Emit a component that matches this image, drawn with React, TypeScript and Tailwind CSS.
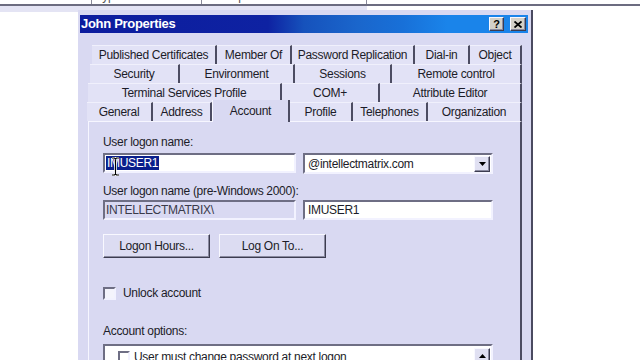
import React from "react";

const raised =
  "border border-t-[#f8f8ff] border-l-[#f8f8ff] border-r-[#3c3c50] border-b-[#3c3c50] shadow-[inset_-1px_-1px_0_#8a8aa0]";
const sunken =
  "border-2 border-t-[#6e6e84] border-l-[#6e6e84] border-r-[#f2f2ff] border-b-[#f2f2ff]";

type Tab = { label: string; w: string; active?: boolean };

const tabRows: { ml: string; tabs: Tab[] }[] = [
  {
    ml: "ml-[12px]",
    tabs: [
      { label: "Published Certificates", w: "w-[125px]" },
      { label: "Member Of", w: "w-[75px]" },
      { label: "Password Replication", w: "w-[123px]" },
      { label: "Dial-in", w: "w-[55px]" },
      { label: "Object", w: "w-[52px]" },
    ],
  },
  {
    ml: "ml-[10px]",
    tabs: [
      { label: "Security", w: "w-[90px]" },
      { label: "Environment", w: "w-[115px]" },
      { label: "Sessions", w: "w-[97px]" },
      { label: "Remote control", w: "w-[130px]" },
    ],
  },
  {
    ml: "ml-[8px]",
    tabs: [
      { label: "Terminal Services Profile", w: "w-[194px]" },
      { label: "COM+", w: "w-[98px]" },
      { label: "Attribute Editor", w: "w-[142px]" },
    ],
  },
  {
    ml: "ml-[7px]",
    tabs: [
      { label: "General", w: "w-[66px]" },
      { label: "Address", w: "w-[59px]" },
      { label: "Account", w: "w-[78px]", active: true },
      { label: "Profile", w: "w-[63px]" },
      { label: "Telephones", w: "w-[75px]" },
      { label: "Organization", w: "w-[94px]" },
    ],
  },
];

function TabButton({ tab }: { tab: Tab }) {
  if (tab.active) {
    return (
      <div
        className={`relative z-10 -mt-[2px] flex h-[22px] shrink-0 items-start justify-center border-l border-r-2 border-l-[#f6f6ff] border-r-[#4c4c62] bg-[#d9d9f2] pt-[2px] ${tab.w}`}
      >
        {tab.label}
      </div>
    );
  }
  return (
    <div
      className={`flex h-[19px] shrink-0 items-center justify-center border-t border-r-2 border-t-[#f0f0fc] border-r-[#4c4c62] bg-[#e2e2f6] ${tab.w}`}
    >
      {tab.label}
    </div>
  );
}

function Triangle({ up = false }: { up?: boolean }) {
  return (
    <svg width="7" height="4" viewBox="0 0 7 4">
      <path d={up ? "M0 4 L7 4 L3.5 0 Z" : "M0 0 L7 0 L3.5 4 Z"} fill="#000" />
    </svg>
  );
}

export default function App() {
  return (
    <div className="relative flex h-[360px] w-[640px] flex-col overflow-hidden bg-white font-['Liberation_Sans',Arial,sans-serif] text-[12px] tracking-[-0.3px] text-[#1c1c28]">
      {/* background window list header */}
      <div className="flex h-[4px] overflow-hidden text-[#555]">
        <div className="w-[92px] border-r border-[#8a8a9a]" />
        <div className="w-[110px] border-r border-[#8a8a9a] pl-[4px]">
          <div className="-mt-[10px] leading-[12px]">Type</div>
        </div>
        <div className="w-[165px] border-r border-[#8a8a9a] pl-[4px]">
          <div className="-mt-[10px] leading-[12px]">Description</div>
        </div>
      </div>
      <div className="h-[2px] w-full bg-[#6c6c80]" />
      <div className="flex h-[6px]">
        <div className="flex w-[367px] items-end bg-[#e4e4f4] pl-[100px]">
          <div className="mb-[1px] flex gap-[3px]">
            <span className="h-[1px] w-[1px] bg-[#8a8aa0]" />
            <span className="h-[1px] w-[1px] bg-[#8a8aa0]" />
          </div>
        </div>
      </div>

      {/* dialog */}
      <div className="-mt-[2px] ml-[78px] flex h-[350px] w-[455px] flex-col border-r-2 border-[#4a4a60] bg-[#d9d9f2] pl-[2px] pt-[5px]">
        {/* title bar */}
        <div className="flex h-[18px] w-[448px] items-center justify-between bg-[linear-gradient(to_right,#0c1c9e_0%,#0e22a2_42%,#1652bc_50%,#1a66cc_62%,#1870d8_72%,#1a84ea_82%,#1a84ea_100%)] pl-[1px] pr-[2px]">
          <span className="text-[13px] font-bold tracking-[-0.3px] text-white">John Properties</span>
          <div className="flex items-center gap-[6px]">
            <div className={`flex h-[14px] w-[15px] items-center justify-center bg-[#d4d0c8] text-[11px] font-bold leading-none text-black ${raised}`}>
              ?
            </div>
            <div className={`flex h-[14px] w-[16px] items-center justify-center bg-[#d4d0c8] ${raised}`}>
              <svg width="8" height="7" viewBox="0 0 8 7">
                <path d="M0.5 0.5 L7.5 6.5 M7.5 0.5 L0.5 6.5" stroke="#000" strokeWidth="1.8" />
              </svg>
            </div>
          </div>
        </div>

        {/* tab rows */}
        <div className="mt-[12px] flex flex-col">
          {tabRows.map((row, i) => (
            <div key={i} className={`flex h-[19px] ${row.ml}`}>
              {row.tabs.map((t) => (
                <TabButton key={t.label} tab={t} />
              ))}
            </div>
          ))}
        </div>

        {/* account panel */}
        <div className="ml-[8px] flex w-[434px] flex-1 flex-col border-t border-l border-r-2 border-t-[#f6f6ff] border-l-[#f6f6ff] border-r-[#4c4c62] bg-[#d9d9f2] pl-[14px] pt-[13px]">
          <div className="leading-[14px]">User logon name:</div>
          <div className="mt-[4px] flex gap-[7px]">
            <div className={`relative flex h-[20px] w-[193px] items-center bg-white ${sunken}`}>
              <span className="ml-[1px] bg-[#0a1f8c] px-[1px] leading-[14px] text-white">IMUSER1</span>
              <svg className="absolute left-[6px] top-[2px]" width="9" height="19" viewBox="0 0 9 19">
                <path
                  d="M1 1 H3.5 L4.5 2 L5.5 1 H8 M4.5 2 V17 M1 18 H3.5 L4.5 17 L5.5 18 H8"
                  fill="none"
                  stroke="#fff"
                  strokeWidth="2.6"
                />
                <path
                  d="M1 1 H3.5 L4.5 2 L5.5 1 H8 M4.5 2 V17 M1 18 H3.5 L4.5 17 L5.5 18 H8"
                  fill="none"
                  stroke="#000"
                  strokeWidth="1.1"
                />
              </svg>
            </div>
            <div className={`flex h-[21px] w-[190px] items-center justify-between bg-white pl-[3px] pr-[1px] ${sunken}`}>
              <span>@intellectmatrix.com</span>
              <div className={`flex h-[16px] w-[16px] items-center justify-center bg-[#e0e0f2] ${raised}`}>
                <Triangle />
              </div>
            </div>
          </div>

          <div className="mt-[10px] leading-[14px]">User logon name (pre-Windows 2000):</div>
          <div className="mt-[2px] flex gap-[7px]">
            <div className={`flex h-[20px] w-[193px] items-center bg-[#d9d9f2] pl-[1px] text-[#3a3a4a] ${sunken}`}>
              INTELLECTMATRIX\
            </div>
            <div className={`flex h-[20px] w-[190px] items-center bg-white pl-[3px] ${sunken}`}>IMUSER1</div>
          </div>

          <div className="mt-[14px] flex gap-[9px]">
            <div className={`flex h-[24px] w-[107px] items-center justify-center bg-[#dcdcf2] ${raised}`}>Logon Hours...</div>
            <div className={`flex h-[24px] w-[107px] items-center justify-center bg-[#dcdcf2] ${raised}`}>Log On To...</div>
          </div>

          <div className="mt-[28px] flex h-[14px] items-center gap-[7px]">
            <div className={`h-[13px] w-[13px] bg-[#f4f4fc] ${sunken}`} />
            <span>Unlock account</span>
          </div>

          <div className="mt-[24px] leading-[14px]">Account options:</div>
          <div className={`mt-[6px] flex h-[40px] w-[390px] items-start justify-between bg-white pl-[13px] pr-[1px] pt-[5px] ${sunken}`}>
            <div className="flex items-center gap-[4px]">
              <div className={`h-[12px] w-[12px] bg-white ${sunken}`} />
              <span className="leading-[12px]">User must change password at next logon</span>
            </div>
            <div className={`-mt-[3px] flex h-[15px] w-[16px] items-center justify-center bg-[#e0e0f2] ${raised}`}>
              <Triangle up />
            </div>
          </div>
        </div>
      </div>
    </div>
  );
}
